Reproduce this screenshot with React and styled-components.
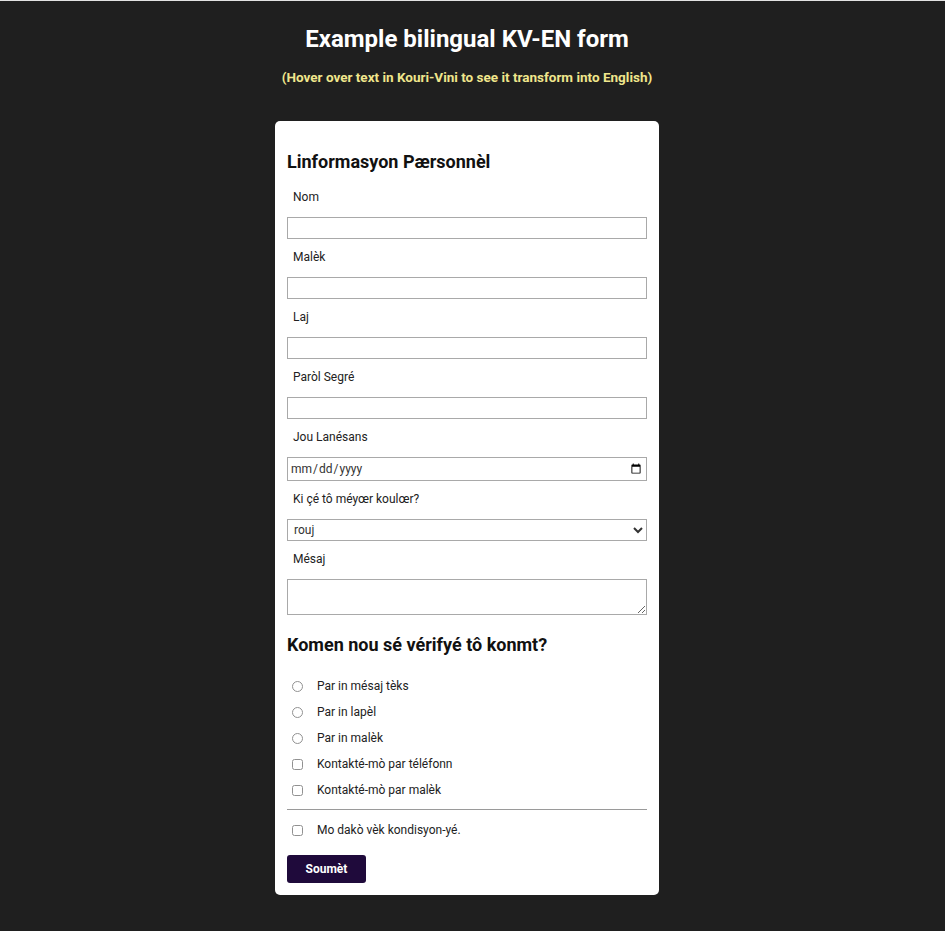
import React from "react";
import styled, { createGlobalStyle } from "styled-components";

const Global = createGlobalStyle`
  html, body {
    margin: 0;
    padding: 0;
    background: #1f1f1f;
    font-family: Roboto, "Liberation Sans", Arial, sans-serif;
  }
  body {
    border-top: 1px solid #e2e2e2;
    min-height: 930px;
  }
`;

const Page = styled.div`
  display: flex;
  flex-direction: column;
  align-items: center;
  padding: 24px 11px 36px 0;
`;

const Title = styled.h1`
  margin: 0;
  font-size: 24px;
  line-height: 28px;
  font-weight: 700;
  color: #ffffff;
`;

const Subtitle = styled.p`
  margin: 15px 0 0;
  font-size: 13.5px;
  line-height: 18px;
  font-weight: 700;
  color: #f0e68c;
`;

const Card = styled.form`
  box-sizing: border-box;
  width: 384px;
  margin-top: 35px;
  padding: 12px;
  background: #ffffff;
  border-radius: 5px;
  display: flex;
  flex-direction: column;
`;

const SectionTitle = styled.h2`
  margin: ${(p) => p.$top}px 0 ${(p) => p.$bottom}px;
  font-size: 18px;
  line-height: 22px;
  font-weight: 700;
  color: #111;
`;

const FieldLabel = styled.label`
  display: block;
  margin: 10px 0 12px;
  padding-left: 6px;
  font-size: 12px;
  line-height: 16px;
  color: #222;
`;

const TextInput = styled.input`
  box-sizing: border-box;
  width: 100%;
  height: ${(p) => p.$h || 22}px;
  margin: 0;
  padding: 0 2px;
  border: 1px solid #a9a9a9;
  border-radius: 0;
  font-family: Roboto, "Liberation Sans", Arial, sans-serif;
  font-size: 12px;
  color: #333;
  background: #fff;
`;

const Select = styled.select`
  box-sizing: border-box;
  width: 100%;
  height: 22px;
  margin: 0;
  padding: 0 2px;
  border: 1px solid #a9a9a9;
  border-radius: 0;
  font-family: Roboto, "Liberation Sans", Arial, sans-serif;
  font-size: 12px;
  color: #333;
  background: #fff;
`;

const TextArea = styled.textarea`
  box-sizing: border-box;
  display: block;
  width: 100%;
  height: 36px;
  margin: 0;
  padding: 2px;
  border: 1px solid #a9a9a9;
  border-radius: 0;
  font-family: Roboto, "Liberation Sans", Arial, sans-serif;
  font-size: 12px;
`;

const OptionRow = styled.label`
  display: flex;
  align-items: center;
  gap: 14px;
  height: 26px;
  padding-left: 5px;
  font-size: 12px;
  color: #222;
`;

const Choice = styled.input`
  width: 11px;
  height: 11px;
  margin: 0;
  flex: none;
  opacity: 0.8;
`;

const Divider = styled.hr`
  width: 100%;
  margin: 6px 0 7px;
  border: none;
  border-top: 1px solid #9a9a9a;
  height: 0;
`;

const SubmitButton = styled.button`
  align-self: flex-start;
  height: 28px;
  margin-top: 12px;
  padding: 0 18.5px;
  border: none;
  border-radius: 3px;
  background: #1f0a3b;
  color: #fff;
  font-family: Roboto, "Liberation Sans", Arial, sans-serif;
  font-size: 12px;
  font-weight: 700;
  cursor: pointer;
`;

const fields = [
  { label: "Nom", type: "text" },
  { label: "Malèk", type: "email" },
  { label: "Laj", type: "number" },
  { label: "Paròl Segré", type: "password" },
];

export default function App() {
  return (
    <>
      <Global />
      <Page>
        <Title>Example bilingual KV-EN form</Title>
        <Subtitle>(Hover over text in Kouri-Vini to see it transform into English)</Subtitle>
        <Card onSubmit={(e) => e.preventDefault()}>
          <SectionTitle $top={18} $bottom={6}>Linformasyon Pærsonnèl</SectionTitle>
          {fields.map((f) => (
            <React.Fragment key={f.label}>
              <FieldLabel>{f.label}</FieldLabel>
              <TextInput type={f.type} />
            </React.Fragment>
          ))}
          <FieldLabel>Jou Lanésans</FieldLabel>
          <TextInput type="date" $h={24} />
          <FieldLabel>Ki çé tô méyœr koulœr?</FieldLabel>
          <Select defaultValue="rouj">
            <option value="rouj">rouj</option>
            <option value="blé">blé</option>
            <option value="vèr">vèr</option>
          </Select>
          <FieldLabel>Mésaj</FieldLabel>
          <TextArea />
          <SectionTitle $top={19} $bottom={17}>Komen nou sé vérifyé tô konmt?</SectionTitle>
          <OptionRow><Choice type="radio" name="verify" />Par in mésaj tèks</OptionRow>
          <OptionRow><Choice type="radio" name="verify" />Par in lapèl</OptionRow>
          <OptionRow><Choice type="radio" name="verify" />Par in malèk</OptionRow>
          <OptionRow><Choice type="checkbox" />Kontakté-mò par téléfonn</OptionRow>
          <OptionRow><Choice type="checkbox" />Kontakté-mò par malèk</OptionRow>
          <Divider />
          <OptionRow><Choice type="checkbox" />Mo dakò vèk kondisyon-yé.</OptionRow>
          <SubmitButton type="submit">Soumèt</SubmitButton>
        </Card>
      </Page>
    </>
  );
}
